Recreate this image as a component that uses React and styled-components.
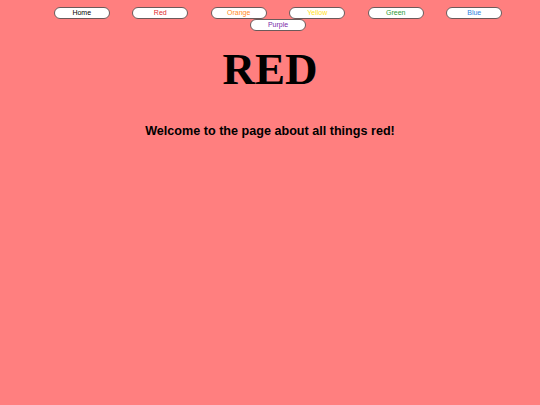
import React from "react";
import styled, { createGlobalStyle } from "styled-components";

const GlobalStyle = createGlobalStyle`
  html, body {
    margin: 0;
    padding: 0;
    background-color: #ff7f7f;
  }
  body {
    font-family: "Liberation Sans", Arial, sans-serif;
  }
`;

const links = [
  { label: "Home", color: "#000000" },
  { label: "Red", color: "#e0282c" },
  { label: "Orange", color: "#ff8a1c" },
  { label: "Yellow", color: "#ffe11a" },
  { label: "Green", color: "#2c9a35" },
  { label: "Blue", color: "#2f7fe0" },
  { label: "Purple", color: "#7a2aa8" },
];

const App = () => {
  return (
    <>
      <GlobalStyle />
      <Page>
        <Nav>
          {links.map((link) => (
            <NavButton key={link.label} $color={link.color}>
              {link.label}
            </NavButton>
          ))}
        </Nav>
        <Title>RED</Title>
        <Welcome>Welcome to the page about all things red!</Welcome>
      </Page>
    </>
  );
};

export default App;

const Page = styled.div`
  min-height: 405px;
  padding: 7px 8px 0 24px;
  box-sizing: border-box;
`;

const Nav = styled.nav`
  display: flex;
  flex-wrap: wrap;
  justify-content: center;
`;

const NavButton = styled.button`
  width: 56px;
  height: 12px;
  margin: 0 11.25px;
  padding: 0;
  box-sizing: border-box;
  background: #ffffff;
  border: 1px solid #6b5a5a;
  border-radius: 7px;
  font-family: "Liberation Sans", Arial, sans-serif;
  font-size: 7px;
  line-height: 10px;
  color: ${(p) => p.$color};
  cursor: pointer;
`;

const Title = styled.h1`
  margin: 12px 0 0;
  margin-left: -16px;
  text-align: center;
  font-family: "Liberation Serif", "Times New Roman", serif;
  font-size: 45px;
  font-weight: 700;
  color: #000000;
`;

const Welcome = styled.h2`
  margin: 29px 0 0;
  margin-left: -16px;
  text-align: center;
  font-family: "Liberation Sans", Arial, sans-serif;
  font-size: 12.6px;
  font-weight: 700;
  color: #000000;
`;
